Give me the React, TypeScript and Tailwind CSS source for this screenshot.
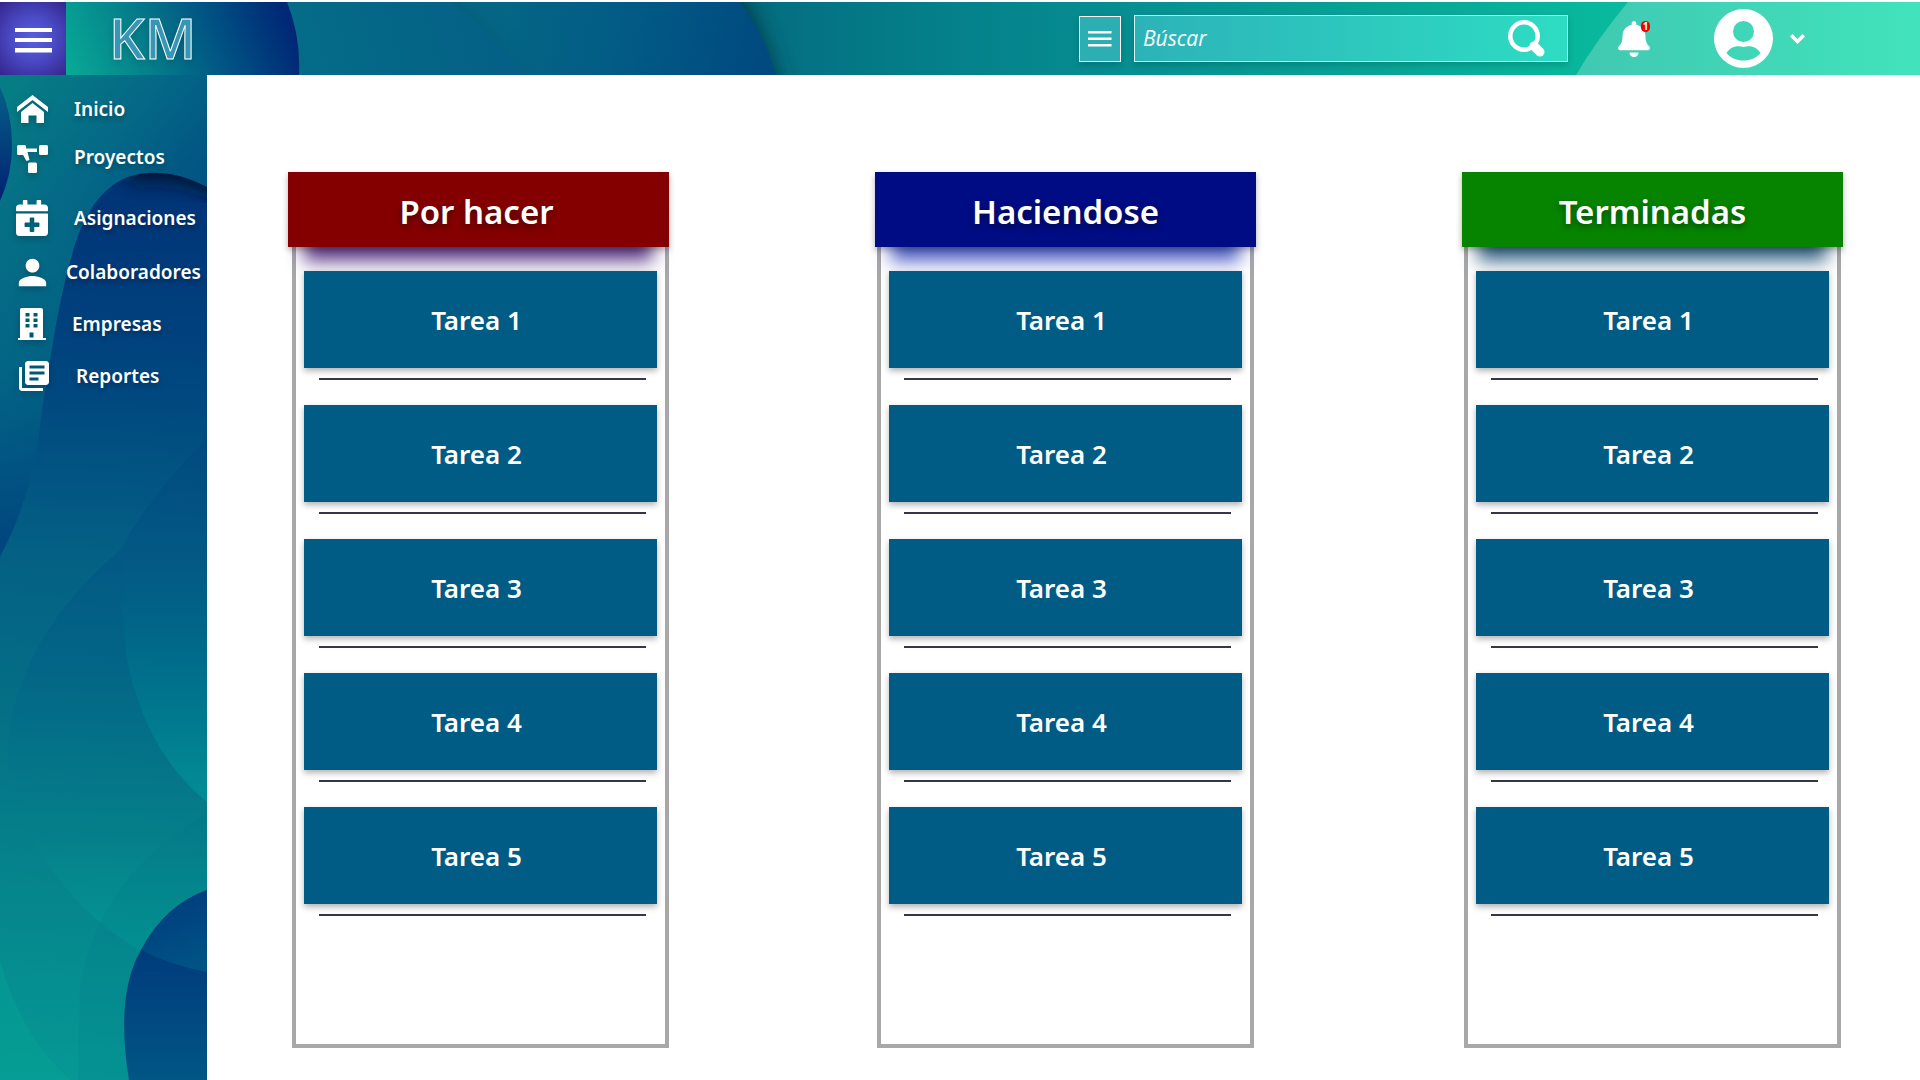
import type { ReactNode } from "react";
import { FaBell, FaCalendarPlus } from "react-icons/fa";
import { MdLibraryBooks, MdPerson } from "react-icons/md";

const tasks = ["Tarea 1", "Tarea 2", "Tarea 3", "Tarea 4", "Tarea 5"];

const columns = [
  {
    title: "Por hacer",
    header:
      "bg-[#840000] pr-1 shadow-[0_3px_6px_rgba(0,0,0,0.3),0_30px_18px_-16px_rgba(62,20,110,0.85)]",
    body: "ml-1",
  },
  {
    title: "Haciendose",
    header:
      "bg-[#000c84] shadow-[0_3px_6px_rgba(0,0,0,0.3),0_30px_18px_-16px_rgba(30,50,180,0.8)]",
    body: "mx-0.5",
  },
  {
    title: "Terminadas",
    header:
      "bg-[#068400] shadow-[0_3px_6px_rgba(0,0,0,0.3),0_30px_18px_-16px_rgba(0,60,100,0.8)]",
    body: "mx-0.5",
  },
];

function HomeIcon() {
  return (
    <svg viewBox="0 0 31 28" className="h-7 w-[31px]" fill="currentColor" aria-hidden="true">
      <path d="M15.500 0L31 12V17L15.500 5L0 17V12Z" />
      <path d="M15.500 8L27 17V28H19.500V20.500H11.500V28H4V17Z" />
    </svg>
  );
}

function ProjectsIcon() {
  return (
    <svg viewBox="0 0 31 28" className="mt-1 h-7 w-[31px]" fill="currentColor" aria-hidden="true">
      <rect x="0" y="0" width="9" height="10" rx="1.500" />
      <rect x="22" y="0" width="9" height="10" rx="1.500" />
      <rect x="11" y="17.500" width="9" height="10.500" rx="1.500" />
      <path d="M9 3.500H20V7H10.500L12.500 15L9.500 16L5.500 9Z" />
    </svg>
  );
}

function BuildingIcon() {
  return (
    <svg viewBox="0 0 28 32" className="h-8 w-7" fill="currentColor" aria-hidden="true">
      <path
        fillRule="evenodd"
        d="M3.500 0H23Q25 0 25 2V30H28V32H0V30H2V1.500Q2 0 3.500 0ZM7.500 5V8.500H11.500V5ZM15.500 5V8.500H19.500V5ZM7.500 10.500V14H11.500V10.500ZM15.500 10.500V14H19.500V10.500ZM7.500 16V19.500H11.500V16ZM15.500 16V19.500H19.500V16ZM11.500 24.500V29.500H15.500V24.500Z"
      />
    </svg>
  );
}

const navigation: { label: string; icon: ReactNode; spacing: string; gap: string }[] = [
  { label: "Inicio", icon: <HomeIcon />, spacing: "mt-[14px]", gap: "ml-2.5" },
  { label: "Proyectos", icon: <ProjectsIcon />, spacing: "mt-2", gap: "ml-2.5" },
  {
    label: "Asignaciones",
    icon: <FaCalendarPlus className="h-9 w-8" preserveAspectRatio="none" />,
    spacing: "mt-[21px]",
    gap: "ml-2.5",
  },
  { label: "Colaboradores", icon: <MdPerson className="size-[41px]" />, spacing: "mt-[14px]", gap: "ml-0.5" },
  { label: "Empresas", icon: <BuildingIcon />, spacing: "mt-3", gap: "ml-2" },
  { label: "Reportes", icon: <MdLibraryBooks className="ml-1 size-9" />, spacing: "mt-3", gap: "ml-3" },
];

function HeaderArt() {
  return (
    <svg
      viewBox="0 0 1920 73"
      preserveAspectRatio="none"
      className="absolute inset-0 size-full"
      aria-hidden="true"
    >
      <defs>
        <linearGradient id="h-base" x1="740" x2="1640" y1="0" y2="0" gradientUnits="userSpaceOnUse">
          <stop offset="0" stopColor="#046c80" />
          <stop offset="0.200" stopColor="#047e89" />
          <stop offset="0.400" stopColor="#068c90" />
          <stop offset="0.700" stopColor="#08a396" />
          <stop offset="1" stopColor="#08bc9e" />
        </linearGradient>
        <linearGradient id="h-third" x1="470" x2="760" y1="0" y2="60" gradientUnits="userSpaceOnUse">
          <stop offset="0" stopColor="#066985" />
          <stop offset="0.500" stopColor="#025c85" />
          <stop offset="1" stopColor="#004a80" />
        </linearGradient>
        <linearGradient id="h-second" x1="300" x2="500" y1="60" y2="10" gradientUnits="userSpaceOnUse">
          <stop offset="0" stopColor="#046c88" />
          <stop offset="1" stopColor="#046086" />
        </linearGradient>
        <linearGradient id="h-first" x1="70" x2="280" y1="80" y2="0" gradientUnits="userSpaceOnUse">
          <stop offset="0" stopColor="#08aa96" />
          <stop offset="0.350" stopColor="#057f8b" />
          <stop offset="0.700" stopColor="#005083" />
          <stop offset="1" stopColor="#002876" />
        </linearGradient>
        <linearGradient id="h-last" x1="1580" x2="1920" y1="0" y2="0" gradientUnits="userSpaceOnUse">
          <stop offset="0" stopColor="#40c9b2" />
          <stop offset="1" stopColor="#41e3bc" />
        </linearGradient>
        <filter id="h-blur" x="-50%" y="-50%" width="200%" height="200%">
          <feGaussianBlur stdDeviation="11" />
        </filter>
      </defs>
      <rect width="1920" height="73" fill="url(#h-base)" />
      <path d="M700 -30H725Q765 20 782 100H700Z" fill="#02343f" opacity="0.900" filter="url(#h-blur)" />
      <path d="M300 0H740Q763 30 776 73H300Z" fill="url(#h-third)" />
      <path d="M400 -20H440Q490 20 530 100H400Z" fill="#04506c" opacity="0.450" filter="url(#h-blur)" />
      <path d="M280 0H452Q493 30 523 73H280Z" fill="url(#h-second)" />
      <path d="M0 0H287Q301 35 299 73H0Z" fill="url(#h-first)" />
      <path d="M1628 0Q1598 36 1576 73H1920V0Z" fill="url(#h-last)" />
    </svg>
  );
}

function SidebarArt() {
  return (
    <svg
      viewBox="0 0 207 1005"
      preserveAspectRatio="none"
      className="absolute inset-0 size-full"
      aria-hidden="true"
    >
      <defs>
        <linearGradient id="s-top" x1="20" y1="10" x2="200" y2="150" gradientUnits="userSpaceOnUse">
          <stop offset="0" stopColor="#067c84" />
          <stop offset="0.500" stopColor="#046787" />
          <stop offset="1" stopColor="#004c80" />
        </linearGradient>
        <linearGradient id="s-left" x1="0" y1="130" x2="70" y2="450" gradientUnits="userSpaceOnUse">
          <stop offset="0" stopColor="#067c84" stopOpacity="0" />
          <stop offset="0.500" stopColor="#036886" stopOpacity="0.700" />
          <stop offset="1" stopColor="#00477f" />
        </linearGradient>
        <linearGradient id="s-ball" x1="0" y1="10" x2="0" y2="125" gradientUnits="userSpaceOnUse">
          <stop offset="0" stopColor="#066088" />
          <stop offset="1" stopColor="#002272" />
        </linearGradient>
        <linearGradient id="s-main" x1="100" y1="98" x2="60" y2="1005" gradientUnits="userSpaceOnUse">
          <stop offset="0" stopColor="#003376" />
          <stop offset="0.120" stopColor="#003c7b" />
          <stop offset="0.260" stopColor="#004a80" />
          <stop offset="0.420" stopColor="#046084" />
          <stop offset="0.600" stopColor="#047086" />
          <stop offset="0.760" stopColor="#05828b" />
          <stop offset="1" stopColor="#069894" />
        </linearGradient>
        <linearGradient id="s-oval" x1="0" y1="365" x2="0" y2="740" gradientUnits="userSpaceOnUse">
          <stop offset="0" stopColor="#00457f" stopOpacity="0.500" />
          <stop offset="0.600" stopColor="#005c88" stopOpacity="0.400" />
          <stop offset="1" stopColor="#007490" stopOpacity="0" />
        </linearGradient>
        <linearGradient id="s-petal" x1="0" y1="470" x2="0" y2="727" gradientUnits="userSpaceOnUse">
          <stop offset="0" stopColor="#005a86" stopOpacity="0" />
          <stop offset="0.500" stopColor="#00708c" />
          <stop offset="1" stopColor="#049296" />
        </linearGradient>
        <linearGradient id="s-bowl" x1="0" y1="760" x2="0" y2="890" gradientUnits="userSpaceOnUse">
          <stop offset="0" stopColor="#00a09a" stopOpacity="0" />
          <stop offset="1" stopColor="#00a49a" stopOpacity="0.450" />
        </linearGradient>
        <linearGradient id="s-navy" x1="0" y1="870" x2="0" y2="1005" gradientUnits="userSpaceOnUse">
          <stop offset="0" stopColor="#003a7c" />
          <stop offset="1" stopColor="#005685" />
        </linearGradient>
        <linearGradient id="s-navy-top" x1="160" y1="815" x2="190" y2="895" gradientUnits="userSpaceOnUse">
          <stop offset="0" stopColor="#003a7e" />
          <stop offset="1" stopColor="#005485" />
        </linearGradient>
        <filter id="s-blur" x="-50%" y="-50%" width="200%" height="200%">
          <feGaussianBlur stdDeviation="10" />
        </filter>
        <clipPath id="s-clip">
          <path d="M207 112C175 96 150 95 128 102C95 115 80 150 72 180C55 240 50 290 42 335C36 390 25 435 0 482V1005H207Z" />
        </clipPath>
      </defs>
      <rect width="207" height="1005" fill="url(#s-top)" />
      <rect width="207" height="500" fill="url(#s-left)" />
      <path d="M0 12Q12 38 12 70Q12 100 0 126Z" fill="url(#s-ball)" />
      <g clipPath="url(#s-clip)">
        <rect width="207" height="1005" fill="url(#s-main)" />
        <path
          d="M240 116C180 88 150 90 128 96"
          fill="none"
          stroke="#00142f"
          strokeWidth="26"
          filter="url(#s-blur)"
        />
        <path d="M207 363Q150 420 120 475Q20 560 8 665Q6 700 12 740H207Z" fill="url(#s-oval)" />
        <path d="M0 885Q20 960 70 1005H0Z" fill="#06a597" opacity="0.400" />
        <path d="M30 760Q75 840 140 875Q170 890 207 897V760Z" fill="url(#s-bowl)" />
        <path d="M207 738Q100 800 80 910L78 1005H207Z" fill="#00748a" opacity="0.140" />
        <path d="M126 470Q118 560 133 610Q155 685 207 727V450Z" fill="url(#s-petal)" />
        <path d="M207 575Q165 580 128 598L133 610Q155 685 207 727Z" fill="#006a8a" opacity="0.120" />
        <path d="M207 815Q165 830 141 875Q115 920 129 1005H207Z" fill="url(#s-navy)" />
        <path d="M207 815Q165 830 141 875Q170 890 207 897Z" fill="url(#s-navy-top)" />
      </g>
    </svg>
  );
}

function Header() {
  return (
    <header className="relative mt-0.5 flex h-[73px] items-center pr-[115px] text-white">
      <HeaderArt />
      <button
        type="button"
        aria-label="Abrir menú"
        className="relative flex h-full w-[66px] items-center bg-[radial-gradient(circle,#5a60e0_0%,#4a4ac4_45%,#35248c_100%)] pt-1 pl-[15px]"
      >
        <svg viewBox="0 0 37 25" className="h-[25px] w-[37px]" fill="currentColor" aria-hidden="true">
          <path d="M0 0H37V4H0ZM0 10H37V14H0ZM0 20H37V24.500H0Z" />
        </svg>
      </button>
      <a
        href="#inicio"
        className="relative mb-1 ml-[43px] font-['Open_Sans',sans-serif] text-[56px] leading-[64px] font-semibold text-[#3796b4] [-webkit-text-stroke:1px_white] [text-shadow:0_3px_6px_rgba(0,0,0,0.16)]"
      >
        KM
      </a>
      <div className="relative ml-auto flex items-center">
        <button
          type="button"
          aria-label="Opciones de búsqueda"
          className="flex h-[46px] w-[42px] items-center justify-center border border-white bg-[#2daeb3] shadow-[0_3px_6px_rgba(0,0,0,0.16)]"
        >
          <svg viewBox="0 0 24 16" className="h-4 w-6" fill="currentColor" aria-hidden="true">
            <path d="M0 0H23.500V2.500H0ZM0 6.500H23.500V9H0ZM0 13H23.500V15.500H0Z" />
          </svg>
        </button>
        <form
          role="search"
          className="ml-[13px] flex h-[47px] w-[434px] items-center border border-[#d6f7f2] bg-linear-to-r from-[#2cb3b8] to-[#2edcc3] pr-[22px] pl-2 shadow-[0_3px_6px_rgba(0,0,0,0.16)]"
        >
          <input
            type="search"
            aria-label="Búscar"
            placeholder="Búscar"
            className="min-w-0 flex-1 bg-transparent font-['Open_Sans',sans-serif] text-[21px] font-medium text-white italic outline-none placeholder:text-white"
          />
          <button type="button" aria-label="Buscar">
            <svg viewBox="0 0 37 37" className="size-[37px]" fill="none" stroke="currentColor" aria-hidden="true">
              <circle cx="16" cy="16" r="13.700" strokeWidth="4.500" />
              <path d="M26 26L32 32" strokeWidth="9" strokeLinecap="round" />
            </svg>
          </button>
        </form>
        <button type="button" aria-label="Notificaciones" className="relative ml-[50px]">
          <FaBell className="h-9 w-8" preserveAspectRatio="none" />
          <span className="absolute top-0 right-0 flex h-[11px] w-[9px] items-center justify-center rounded-full bg-[#f00000] font-['Open_Sans',sans-serif] text-[10px] leading-none font-bold">
            1
          </span>
        </button>
        <button type="button" aria-label="Cuenta" className="ml-16 flex items-center">
          <svg viewBox="0 0 59 59" className="size-[59px]" fill="currentColor" aria-hidden="true">
            <path
              fillRule="evenodd"
              d="M29.500 0A29.500 29.500 0 1 1 29.500 59A29.500 29.500 0 1 1 29.500 0ZM29.500 12A10.500 10.500 0 1 0 29.500 33A10.500 10.500 0 1 0 29.500 12ZM12.500 44C20 54 39 54 46.500 44C43 39 38 36 29.500 38C21 36 16 39 12.500 44Z"
            />
          </svg>
          <svg viewBox="0 0 15 10" className="ml-[17px] h-2.5 w-[15px]" fill="currentColor" aria-hidden="true">
            <path d="M2.500 0L7.500 5L12.500 0L15 2.500L7.500 10L0 2.500Z" />
          </svg>
        </button>
      </div>
    </header>
  );
}

function Sidebar() {
  return (
    <aside className="relative w-[207px] shrink-0 overflow-hidden">
      <SidebarArt />
      <nav
        aria-label="Principal"
        className="relative text-[19px] leading-6 font-semibold text-white [text-shadow:0_3px_5px_rgba(0,0,0,0.3)]"
      >
        <ul>
          {navigation.map((item) => (
            <li key={item.label} className={item.spacing}>
              <a href={"#" + item.label.toLowerCase()} className="flex h-10 items-center">
                <span className="flex w-16 shrink-0 items-center justify-center drop-shadow-[0_3px_3px_rgba(0,0,0,0.2)]">
                  {item.icon}
                </span>
                <span className={item.gap}>{item.label}</span>
              </a>
            </li>
          ))}
        </ul>
      </nav>
    </aside>
  );
}

export default function App() {
  return (
    <div className="flex min-h-screen flex-col bg-white font-['Noto_Sans',sans-serif]">
      <Header />
      <div className="flex flex-1">
        <Sidebar />
        <main className="grid flex-1 grid-cols-3 items-start gap-[206px] pt-[97px] pr-[77px] pb-8 pl-[81px]">
          {columns.map((column) => (
            <section key={column.title}>
              <h2
                className={
                  "relative flex h-[75px] items-center justify-center pt-1 text-[33px] leading-10 font-semibold text-white [text-shadow:0_3px_6px_rgba(0,0,0,0.45)] " +
                  column.header
                }
              >
                {column.title}
              </h2>
              <div className={"border-4 border-t-0 border-[#a8a8a8] px-2 pt-6 pb-32 " + column.body}>
                <ul className="relative z-10 flex flex-col gap-[25px]">
                  {tasks.map((task) => (
                    <li key={task}>
                      <button
                        type="button"
                        className="flex h-[97px] w-full items-center justify-center bg-[#005c84] pr-2 text-[26px] leading-8 font-semibold text-white shadow-[0_3px_6px_rgba(0,0,0,0.3)]"
                      >
                        {task}
                      </button>
                      <div className="mt-2.5 mr-[11px] ml-[15px] h-0.5 bg-[#35364a]" />
                    </li>
                  ))}
                </ul>
              </div>
            </section>
          ))}
        </main>
      </div>
    </div>
  );
}
